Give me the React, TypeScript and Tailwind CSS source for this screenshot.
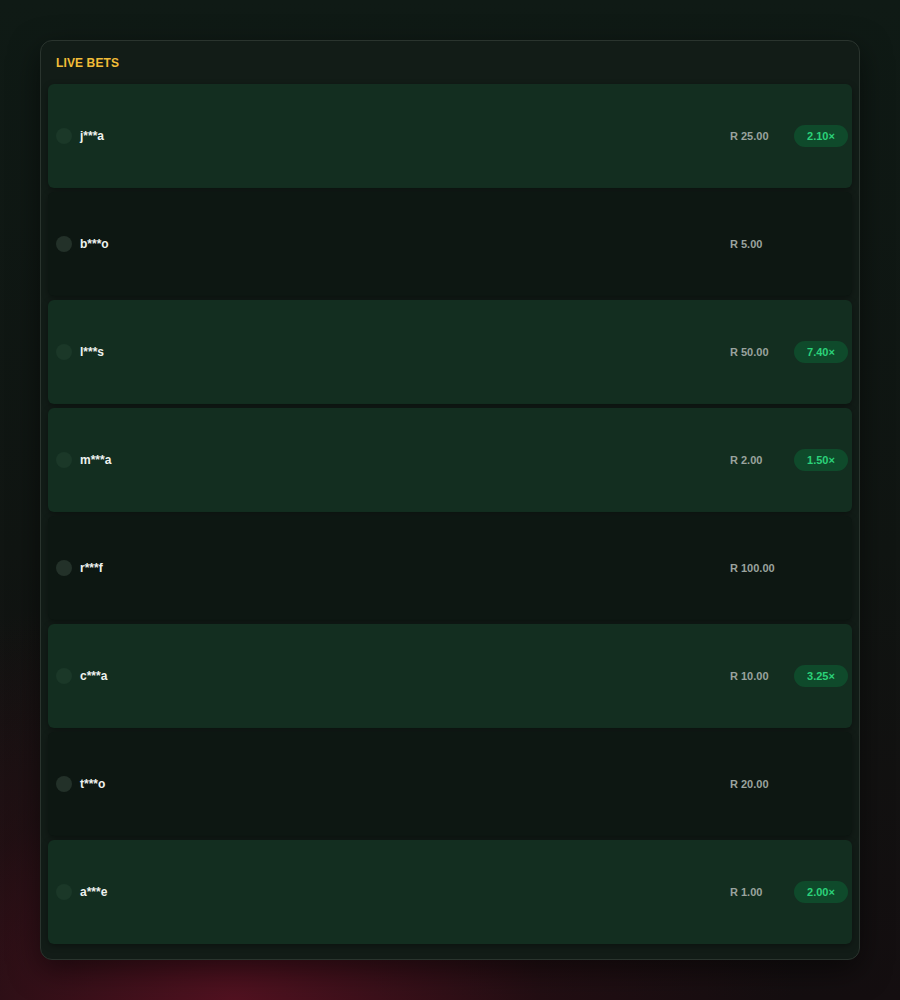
import React from "react";

type Bet = { name: string; amount: string; mult?: string };

const bets: Bet[] = [
  { name: "j***a", amount: "R 25.00", mult: "2.10×" },
  { name: "b***o", amount: "R 5.00" },
  { name: "l***s", amount: "R 50.00", mult: "7.40×" },
  { name: "m***a", amount: "R 2.00", mult: "1.50×" },
  { name: "r***f", amount: "R 100.00" },
  { name: "c***a", amount: "R 10.00", mult: "3.25×" },
  { name: "t***o", amount: "R 20.00" },
  { name: "a***e", amount: "R 1.00", mult: "2.00×" },
];

export default function App() {
  return (
    <div
      className="w-[900px] h-[1000px] bg-[#0e1411] bg-[radial-gradient(ellipse_560px_420px_at_26%_100%,rgba(88,18,34,0.9),rgba(60,14,24,0.35)_55%,transparent),linear-gradient(180deg,#0f1a15_0%,#101512_55%,#140e10_100%)] pt-[40px] px-[40px]"
      style={{ fontFamily: '"Liberation Sans", Arial, sans-serif' }}
    >
      <div className="w-[820px] h-[920px] rounded-[12px] border border-[#2a342e] bg-[#121c17] px-[7px] pt-[14px] pb-[15px] shadow-[0_10px_30px_rgba(0,0,0,0.5)]">
        <div className="px-2 text-[12px] leading-4 font-bold text-[#f2bd38] tracking-[0.01em]">
          LIVE BETS
        </div>
        <div className="mt-[13px] flex flex-col gap-[4px]">
          {bets.map((b, i) => (
            <div
              key={i}
              className={
                b.mult
                  ? "h-[104px] rounded-[6px] bg-[#132e20] flex items-center pl-2 pr-1 shadow-[0_2px_6px_rgba(0,0,0,0.35)]"
                  : "h-[104px] rounded-[6px] bg-[#0d1712] flex items-center pl-2 pr-1 shadow-[0_2px_6px_rgba(0,0,0,0.35)]"
              }
            >
              <div
                className={
                  b.mult
                    ? "w-4 h-4 rounded-full bg-[#1b3828]"
                    : "w-4 h-4 rounded-full bg-[#233129]"
                }
              />
              <div className="ml-2 flex-1 text-[12px] font-bold text-[#eef2ef]">{b.name}</div>
              <div className="w-[64px] text-[11px] font-bold text-[#9aa39e]">{b.amount}</div>
              <div className="w-[54px] flex justify-center">
                {b.mult ? (
                  <span className="w-[54px] h-[22px] rounded-full bg-[#0f4a2b] text-[#2bd27a] text-[11px] font-bold flex items-center justify-center">
                    {b.mult}
                  </span>
                ) : null}
              </div>
            </div>
          ))}
        </div>
      </div>
    </div>
  );
}
